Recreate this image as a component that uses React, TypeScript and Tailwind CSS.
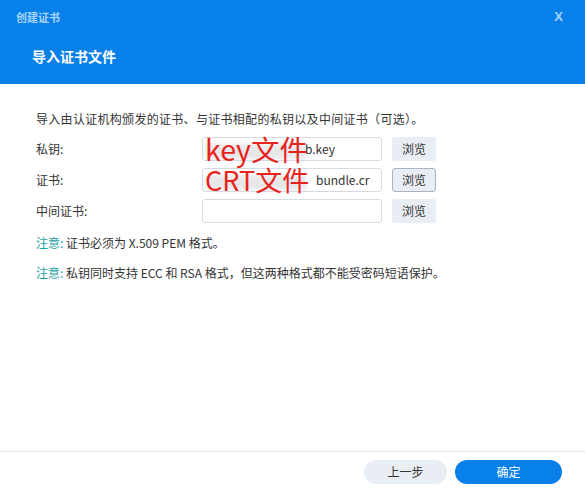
import React from "react";

const font = { fontFamily: '"Noto Sans CJK SC", "Noto Sans", sans-serif' };

function Row({
  label,
  value,
  valueLeft,
  red,
  redSize,
  focused,
}: {
  label: string;
  value?: string;
  valueLeft?: number;
  red?: string;
  redSize?: number;
  focused?: boolean;
}) {
  return (
    <div className="flex items-center h-[24px]">
      <div className="w-[166px] text-[12px] text-[#333]">{label}</div>
      <div className="relative w-[180px] h-[24px] rounded-[3px] border border-[#d5dbe3] bg-white">
        {red && (
          <div className="absolute left-[3px] top-[6px] w-[100px] h-[15px] bg-[#e2e2e2] blur-[2px] opacity-80" />
        )}
        {value && (
          <div className="absolute inset-0 overflow-hidden rounded-[3px]">
            <span
              className="absolute top-[2px] text-[12px] leading-[18px] text-[#333] whitespace-nowrap"
              style={{ left: valueLeft }}
            >
              {value}
            </span>
          </div>
        )}
        {red && (
          <span
            className="absolute left-[2px] top-[-6px] leading-[34px] text-[#e8231e] whitespace-nowrap"
            style={{ fontSize: redSize }}
          >
            {red}
          </span>
        )}
      </div>
      <button
        className={`ml-[10px] w-[44px] h-[24px] rounded-[3px] text-[12px] text-[#333] bg-[#e9eef4] ${
          focused ? "border border-[#aab4c0]" : ""
        }`}
      >
        浏览
      </button>
    </div>
  );
}

export default function App() {
  return (
    <div className="w-[585px] h-[492px] bg-white flex flex-col" style={font}>
      <div className="h-[84px] bg-[#0780ea] flex flex-col">
        <div className="flex items-center justify-between h-[34px] pl-[16px] pr-[22px]">
          <span className="text-[11px] font-bold text-[#a9d4fb]">创建证书</span>
          <span className="text-[13px] font-bold text-[#a9d4fb]" style={{ fontFamily: '"Liberation Sans", sans-serif' }}>X</span>
        </div>
        <div className="pl-[32px] pt-[12px] text-[14px] font-bold text-white">导入证书文件</div>
      </div>
      <div className="flex-1 flex flex-col pl-[36px] pt-[26px]">
        <div className="text-[12px] text-[#333] leading-[18px] tracking-[0.3px]">导入由认证机构颁发的证书、与证书相配的私钥以及中间证书（可选）。</div>
        <div className="mt-[9px] flex flex-col gap-[7px]">
          <Row label="私钥:" value="b.key" valueLeft={102} red="key文件" redSize={28.5} />
          <Row label="证书:" value="bundle.cr" valueLeft={113} red="CRT文件" redSize={27} focused />
          <Row label="中间证书:" />
        </div>
        <div className="mt-[11px] text-[12px] text-[#333] leading-[18px]">
          <span className="text-[#1aa0a3]">注意:</span> 证书必须为 X.509 PEM 格式。
        </div>
        <div className="mt-[12px] text-[12px] text-[#333] leading-[18px]">
          <span className="text-[#1aa0a3]">注意:</span> 私钥同时支持 ECC 和 RSA 格式，但这两种格式都不能受密码短语保护。
        </div>
      </div>
      <div className="h-[41px] border-t border-[#e4e8ee] flex items-center justify-end pr-[23px] gap-[8px]">
        <button className="w-[83px] h-[24px] rounded-full bg-[#e9eef4] text-[12px] text-[#333]">上一步</button>
        <button className="w-[107px] h-[24px] rounded-full bg-[#0780ea] text-[12px] text-white">确定</button>
      </div>
    </div>
  );
}
